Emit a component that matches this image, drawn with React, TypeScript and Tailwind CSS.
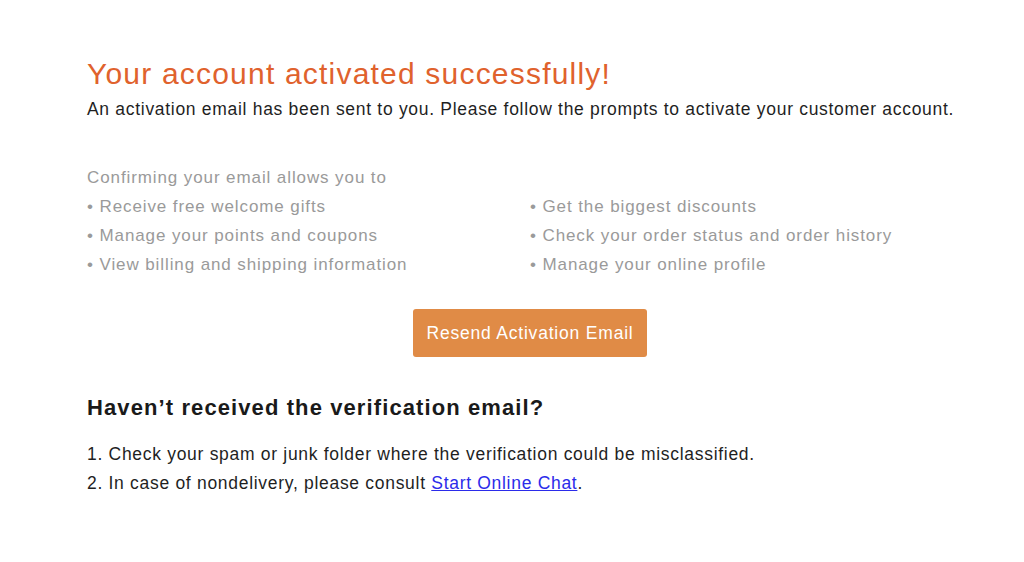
export default function App() {
  const left = ["Receive free welcome gifts", "Manage your points and coupons", "View billing and shipping information"];
  const right = ["Get the biggest discounts", "Check your order status and order history", "Manage your online profile"];
  return (
    <div
      className="w-[1024px] h-[562px] bg-white overflow-hidden pl-[87px] pr-[51px] pt-[57px]"
      style={{ fontFamily: '"Liberation Sans", Arial, sans-serif' }}
    >
      <h1 className="text-[30px] leading-[34px] tracking-[1.2px] text-[#e0622d] font-normal">
        Your account activated successfully!
      </h1>
      <p className="mt-[8px] text-[17.5px] leading-[20px] tracking-[0.7px] text-[#1f1f1f]">
        An activation email has been sent to you. Please follow the prompts to activate your customer account.
      </p>
      <div className="mt-[44px] text-[17px] leading-[29px] tracking-[0.9px] text-[#9a9a9a]">
        <div>Confirming your email allows you to</div>
        <div className="flex">
          <div className="w-[443px]">
            {left.map((t) => (
              <div key={t}>• {t}</div>
            ))}
          </div>
          <div>
            {right.map((t) => (
              <div key={t}>• {t}</div>
            ))}
          </div>
        </div>
      </div>
      <div className="flex justify-center mt-[30px]">
        <button className="w-[234px] h-[48px] rounded-[3px] bg-[#e08b46] text-white text-[17.5px] tracking-[0.8px]">
          Resend Activation Email
        </button>
      </div>
      <h2 className="mt-[38px] text-[22px] leading-[26px] tracking-[1.1px] font-bold text-[#1a1a1a]">
        Haven’t received the verification email?
      </h2>
      <ol className="mt-[19px] text-[17.5px] leading-[29px] tracking-[0.7px] text-[#1f1f1f]">
        <li>1. Check your spam or junk folder where the verification could be misclassified.</li>
        <li>
          2. In case of nondelivery, please consult{" "}
          <a href="#" className="text-[#2b2bea] underline">Start Online Chat</a>.
        </li>
      </ol>
    </div>
  );
}
